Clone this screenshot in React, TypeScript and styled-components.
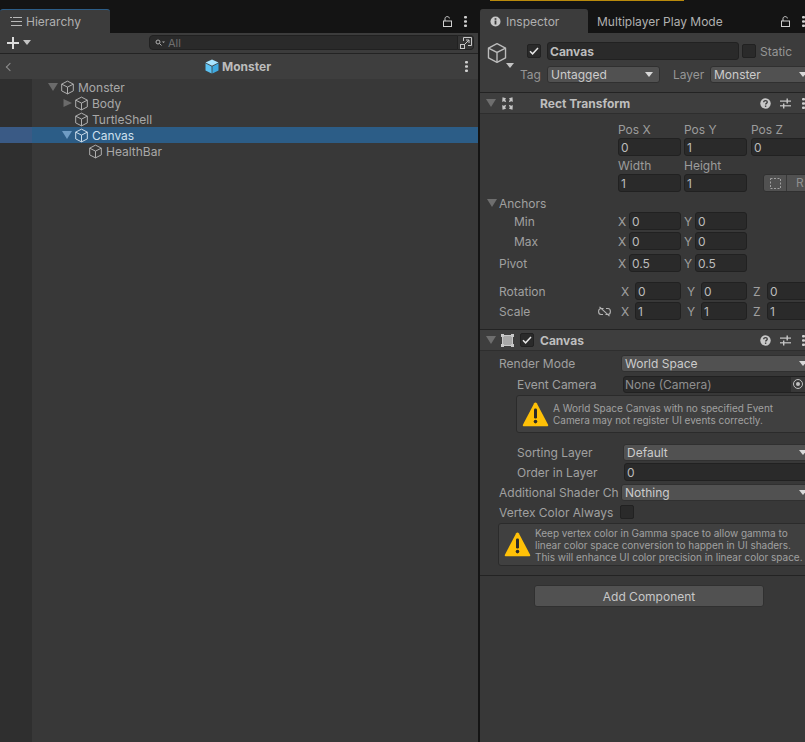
import React from "react";
import styled, { createGlobalStyle } from "styled-components";

const GlobalStyle = createGlobalStyle`
  html, body {
    margin: 0;
    padding: 0;
    background: #141414;
  }
  * { box-sizing: border-box; }
`;

const CubeIcon = ({ size = 16, color = "#c4c4c4", fill = "none" }: { size?: number; color?: string; fill?: string }) => (
  <svg width={size} height={size} viewBox="0 0 16 16" fill="none">
    <path d="M8 1.2 14.2 4.4v7.2L8 14.8 1.8 11.6V4.4Z" fill={fill} stroke={color} strokeWidth={1} strokeLinejoin="round" />
    <path d="M1.8 4.4 8 7.6l6.2-3.2M8 7.6v7.2" stroke={color} strokeWidth={1} />
  </svg>
);

const BlueCube = () => (
  <svg width="14" height="15" viewBox="0 0 14 15">
    <path d="M7 .5 13.5 3.6 7 6.8.5 3.6Z" fill="#a8e4ff" />
    <path d="M.5 4.3 6.6 7.4V14.5L.5 11.4Z" fill="#5cc2f2" />
    <path d="M13.5 4.3 7.4 7.4V14.5L13.5 11.4Z" fill="#3fa9e0" />
  </svg>
);

const Lock = () => (
  <svg width="9" height="11" viewBox="0 0 9 11" fill="none">
    <rect x="0.5" y="5" width="8" height="5.5" stroke="#d0d0d0" />
    <path d="M2 5V2.6C2 1.4 3 .6 4.2.6S6.4 1.4 6.4 2.4" stroke="#d0d0d0" />
  </svg>
);

const Kebab = () => (
  <svg width="3" height="11" viewBox="0 0 3 11">
    <rect y="0" width="3" height="2.6" rx="1" fill="#d0d0d0" />
    <rect y="4.2" width="3" height="2.6" rx="1" fill="#d0d0d0" />
    <rect y="8.4" width="3" height="2.6" rx="1" fill="#d0d0d0" />
  </svg>
);

const Check = () => (
  <svg width="10" height="8" viewBox="0 0 10 8" fill="none">
    <path d="M1 4.2 3.6 6.8 9 1" stroke="#e6e6e6" strokeWidth="1.5" />
  </svg>
);

const Warning = () => (
  <svg width="27" height="27" viewBox="0 0 27 27">
    <path d="M13.5 1.5c.6 0 1 .3 1.3.8l11.3 21.4c.4.8-.1 1.6-1 1.6H1.9c-.9 0-1.4-.8-1-1.6L12.2 2.3c.3-.5.7-.8 1.3-.8Z" fill="#ffc107" />
    <rect x="12" y="7.5" width="3" height="10" rx="1.2" fill="#2b2b2b" />
    <circle cx="13.5" cy="20.6" r="1.8" fill="#2b2b2b" />
  </svg>
);

const HelpIcon = () => (
  <svg width="11" height="11" viewBox="0 0 11 11">
    <circle cx="5.5" cy="5.5" r="5.2" fill="#c8c8c8" />
    <path d="M3.7 4.2c0-1 .8-1.6 1.8-1.6s1.8.6 1.8 1.5c0 1.3-1.7 1.2-1.7 2.5" fill="none" stroke="#3c3c3c" strokeWidth="1.3" />
    <rect x="4.9" y="7.5" width="1.4" height="1.4" fill="#3c3c3c" />
  </svg>
);

const SlidersIcon = () => (
  <svg width="11" height="11" viewBox="0 0 11 11" fill="#c8c8c8">
    <rect x="0" y="2.5" width="11" height="1.2" />
    <rect x="0" y="7.2" width="11" height="1.2" />
    <rect x="6.5" y="0.5" width="1.4" height="5" />
    <rect x="3" y="5.5" width="1.4" height="5" />
  </svg>
);

const RectToolIcon = () => (
  <svg width="13" height="13" viewBox="0 0 13 13" fill="#c4c4c4">
    <path d="M1.5 .3 5 1.2 4.2 2.6 5.2 5.2 2.6 4.2 1.2 5Z" />
    <path d="M11.5 .3 8 1.2 8.8 2.6 7.8 5.2 10.4 4.2 11.8 5Z" />
    <path d="M1.5 12.7 5 11.8 4.2 10.4 5.2 7.8 2.6 8.8 1.2 8Z" />
    <path d="M11.5 12.7 8 11.8 8.8 10.4 7.8 7.8 10.4 8.8 11.8 8Z" />
  </svg>
);

const CanvasIcon = () => (
  <svg width="13" height="13" viewBox="0 0 13 13" fill="none">
    <rect x="1.5" y="1.5" width="10" height="10" fill="#a8a8a8" stroke="#c8c8c8" />
    <rect x="0" y="0" width="3" height="3" fill="#c8c8c8" />
    <rect x="10" y="0" width="3" height="3" fill="#c8c8c8" />
    <rect x="0" y="10" width="3" height="3" fill="#c8c8c8" />
    <rect x="10" y="10" width="3" height="3" fill="#c8c8c8" />
  </svg>
);

const DashedSquare = () => (
  <svg width="11" height="11" viewBox="0 0 11 11" fill="none">
    <rect x="0.5" y="0.5" width="10" height="10" stroke="#a0a0a0" strokeDasharray="2 1.5" />
  </svg>
);

const Page = styled.div`
  width: 805px;
  height: 742px;
  display: flex;
  overflow: hidden;
  background: #141414;
  font-family: Inter, "Liberation Sans", sans-serif;
  font-size: 12px;
  color: #b4b4b4;
`;

const Panel = styled.div<{ $width: number }>`
  width: ${(p) => p.$width}px;
  flex: none;
  display: flex;
  flex-direction: column;
  overflow: hidden;
`;

const PlayBarSlot = styled.div`
  height: 9px;
  flex: none;
  padding-left: 10px;
`;

const PlayBar = styled.div`
  width: 194px;
  height: 1px;
  background: #b98a0c;
`;

const TabStrip = styled.div`
  height: 24px;
  flex: none;
  display: flex;
  align-items: stretch;
  background: #141414;
`;

const Tab = styled.div<{ $active?: boolean; $blue?: boolean; $width: number; $gap?: number }>`
  width: ${(p) => p.$width}px;
  display: flex;
  align-items: center;
  gap: ${(p) => p.$gap ?? 4}px;
  padding-left: ${(p) => (p.$active ? 10 : 9)}px;
  background: ${(p) => (p.$active ? "#3c3c3c" : "transparent")};
  border-radius: 3px 3px 0 0;
  border-top: 1px solid ${(p) => (p.$blue ? "#2c5d87" : p.$active ? "#3c3c3c" : "transparent")};
  color: #b0b0b0;
  font-size: 12px;
`;

const TabTools = styled.div<{ $right: number; $gap: number }>`
  margin-left: auto;
  padding-right: ${(p) => p.$right}px;
  display: flex;
  align-items: center;
  gap: ${(p) => p.$gap}px;
`;

const ListGlyph = () => (
  <svg width="12" height="9" viewBox="0 0 12 9" fill="#b8b8b8">
    <rect x="0" y="0" width="2" height="1" />
    <rect x="3" y="0" width="9" height="1" />
    <rect x="1" y="4" width="2" height="1" />
    <rect x="3" y="4" width="9" height="1" />
    <rect x="1" y="8" width="2" height="1" />
    <rect x="3" y="8" width="9" height="1" />
  </svg>
);

const Toolbar = styled.div`
  height: 21px;
  flex: none;
  display: flex;
  align-items: center;
  padding: 0 4px 1px 7px;
  background: #3c3c3c;
  border-bottom: 1px solid #232323;
`;

const PlusMenu = styled.div`
  width: 142px;
  display: flex;
  align-items: center;
  gap: 4px;
`;

const Plus = styled.span`
  position: relative;
  display: block;
  width: 12px;
  height: 12px;
  &::before,
  &::after {
    content: "";
    position: absolute;
    background: #dcdcdc;
  }
  &::before {
    left: 0;
    right: 0;
    top: 5px;
    height: 2px;
  }
  &::after {
    top: 0;
    bottom: 0;
    left: 5px;
    width: 2px;
  }
`;

const Caret = styled.span<{ $color?: string }>`
  display: block;
  width: 0;
  height: 0;
  flex: none;
  border-left: 4px solid transparent;
  border-right: 4px solid transparent;
  border-top: 5px solid ${(p) => p.$color ?? "#c4c4c4"};
`;

const Search = styled.div`
  width: 309px;
  height: 15px;
  display: flex;
  align-items: center;
  gap: 3px;
  padding-left: 5px;
  background: #2a2a2a;
  border: 1px solid #212121;
  border-radius: 4px 0 0 4px;
  color: #6f6f6f;
  font-size: 11px;
`;

const SearchButton = styled.div`
  width: 16px;
  height: 15px;
  display: flex;
  align-items: center;
  justify-content: center;
  background: #353535;
  border: 1px solid #232323;
  border-left: 0;
  border-radius: 0 4px 4px 0;
`;

const Breadcrumb = styled.div`
  height: 25px;
  flex: none;
  display: flex;
  align-items: center;
  background: #3e3e3e;
  padding: 0 10px 0 5px;
`;

const BackChevron = styled.span`
  display: block;
  width: 6px;
  height: 6px;
  margin-left: 2px;
  border-left: 1.5px solid #8f8f8f;
  border-bottom: 1.5px solid #8f8f8f;
  transform: rotate(45deg);
`;

const BreadcrumbTitle = styled.div`
  flex: 1;
  display: flex;
  align-items: center;
  justify-content: center;
  gap: 3px;
  padding-right: 2px;
  font-weight: 700;
  font-size: 12px;
  color: #bcbcbc;
`;

const Tree = styled.div`
  flex: 1;
  background: linear-gradient(to right, #2f2f2f 32px, #383838 32px);
`;

const TreeRow = styled.div<{ $depth: number; $selected?: boolean }>`
  height: 16px;
  display: flex;
  align-items: center;
  gap: 3px;
  padding-left: ${(p) => 48 + p.$depth * 14}px;
  background: ${(p) => (p.$selected ? "linear-gradient(to right, #3a5a85 32px, #2c5d87 32px)" : "transparent")};
  color: ${(p) => (p.$selected ? "#cfe0ee" : "#a8a8a8")};
`;

const Arrow = styled.span<{ $dir?: "down" | "right" | "none"; $color?: string }>`
  display: block;
  flex: none;
  width: 10px;
  height: 8px;
  margin-right: -1px;
  visibility: ${(p) => (p.$dir === "none" ? "hidden" : "visible")};
  background: ${(p) => p.$color ?? "#6b6b6b"};
  clip-path: ${(p) => (p.$dir === "right" ? "polygon(15% 0, 100% 50%, 15% 100%)" : "polygon(0 0, 100% 0, 50% 100%)")};
`;

const Splitter = styled.div`
  width: 2px;
  flex: none;
  background: #141414;
`;

const InspectorBody = styled.div`
  flex: 1;
  width: 334px;
  background: #383838;
`;

const ObjectHeader = styled.div`
  height: 60px;
  padding: 8px 0 0 6px;
  background: #3c3c3c;
  border-bottom: 1px solid #232323;
`;

const ObjectTop = styled.div`
  display: flex;
  align-items: center;
  height: 20px;
`;

const ObjectIcon = styled.div`
  position: relative;
  width: 22px;
  height: 22px;
  margin-top: 4px;
  flex: none;
  & > span {
    position: absolute;
    right: -6px;
    bottom: -4px;
  }
`;

const CheckBox = styled.span<{ $margin?: number }>`
  display: flex;
  align-items: center;
  justify-content: center;
  width: 14px;
  height: 14px;
  flex: none;
  margin-left: ${(p) => p.$margin ?? 0}px;
  background: #2a2a2a;
  border: 1px solid #212121;
  border-radius: 2px;
`;

const TextBox = styled.div<{ $width?: number; $height?: number; $margin?: number; $bold?: boolean; $color?: string }>`
  width: ${(p) => (p.$width ? `${p.$width}px` : "auto")};
  height: ${(p) => p.$height ?? 18}px;
  flex: ${(p) => (p.$width ? "none" : 1)};
  margin-left: ${(p) => p.$margin ?? 0}px;
  display: flex;
  align-items: center;
  padding-left: 2px;
  background: #2a2a2a;
  border: 1px solid #212121;
  border-radius: 3px;
  color: ${(p) => p.$color ?? "#bcbcbc"};
  font-weight: ${(p) => (p.$bold ? 700 : 400)};
  font-size: 12px;
  overflow: hidden;
  white-space: nowrap;
`;

const Dropdown = styled.div<{ $width?: number; $margin?: number }>`
  width: ${(p) => (p.$width ? `${p.$width}px` : "auto")};
  flex: ${(p) => (p.$width ? "none" : 1)};
  height: 17px;
  margin-left: ${(p) => p.$margin ?? 0}px;
  display: flex;
  align-items: center;
  justify-content: space-between;
  padding: 0 6px 0 3px;
  background: #515151;
  border: 1px solid #303030;
  border-radius: 3px;
  color: #cccccc;
  font-size: 12px;
  white-space: nowrap;
`;

const MutedText = styled.span<{ $margin?: number; $width?: number }>`
  margin-left: ${(p) => p.$margin ?? 0}px;
  width: ${(p) => (p.$width ? `${p.$width}px` : "auto")};
  flex: none;
  color: #969696;
  white-space: nowrap;
`;

const TagRow = styled.div`
  display: flex;
  align-items: center;
  height: 18px;
  margin-top: 4px;
  padding-left: 34px;
`;

const ComponentHeader = styled.div`
  height: 21px;
  display: flex;
  align-items: center;
  padding: 0 0 0 6px;
  background: #3e3e3e;
  border-bottom: 1px solid #2e2e2e;
`;

const IconGap = styled.span`
  width: 6px;
  flex: none;
`;

const ComponentTitle = styled.span<{ $margin: number }>`
  margin-left: ${(p) => p.$margin}px;
  flex: 1;
  font-weight: 700;
  color: #bebebe;
`;

const HeaderTools = styled.div`
  display: flex;
  align-items: center;
  gap: 9px;
  width: 52px;
  margin-right: 2px;
  margin-left: auto;
  & > svg:last-child {
    margin-left: 2px;
  }
`;

const Row = styled.div<{ $top?: number; $height?: number; $indent?: number }>`
  display: grid;
  grid-template-columns: ${(p) => 119 - (p.$indent ?? 0)}px 1fr;
  align-items: center;
  height: ${(p) => p.$height ?? 18}px;
  margin-top: ${(p) => p.$top ?? 0}px;
  padding-left: ${(p) => 19 + (p.$indent ?? 0)}px;
`;

const ColumnRow = styled.div<{ $top?: number }>`
  display: flex;
  gap: 3px;
  padding-left: 138px;
  height: 18px;
  margin-top: ${(p) => p.$top ?? 0}px;
  align-items: center;
`;

const Caption = styled.span<{ $margin?: number }>`
  width: 63px;
  flex: none;
  margin-left: ${(p) => p.$margin ?? 0}px;
  color: #9c9c9c;
`;

const Label = styled.span<{ $between?: boolean }>`
  display: flex;
  align-items: center;
  justify-content: ${(p) => (p.$between ? "space-between" : "flex-start")};
  color: #a0a0a0;
  white-space: nowrap;
  padding-right: ${(p) => (p.$between ? 7 : 0)}px;
`;

const AnchorArrow = styled(Arrow)`
  margin-right: 2px;
`;

const Axes = styled.div`
  display: flex;
  gap: 3px;
`;

const AxisField = styled.div<{ $label: number }>`
  width: 63px;
  display: flex;
  align-items: center;
  flex: none;
  & > span {
    width: ${(p) => p.$label}px;
    flex: none;
    padding-left: ${(p) => (p.$label > 11 ? 3 : 0)}px;
    color: #a0a0a0;
  }
  & > div {
    flex: 1;
  }
`;

const AnchorButtons = styled.div`
  margin-left: 13px;
  height: 18px;
  width: 70px;
  flex: none;
  display: flex;
  background: #515151;
  border: 1px solid #303030;
  border-radius: 3px;
  & > span {
    width: 23px;
    display: flex;
    align-items: center;
    justify-content: center;
    border-right: 1px solid #383838;
  }
  & > b {
    flex: 1;
    font-weight: 400;
    padding-left: 9px;
    color: #8e8e8e;
    line-height: 16px;
  }
`;

const SectionEnd = styled.div<{ $height: number }>`
  height: ${(p) => p.$height}px;
  border-bottom: 1px solid #232323;
`;

const FieldLine = styled.div<{ $top?: number; $indent?: number; $col: number; $height?: number }>`
  display: grid;
  grid-template-columns: ${(p) => p.$col}px 1fr;
  align-items: center;
  height: ${(p) => p.$height ?? 18}px;
  margin-top: ${(p) => p.$top ?? 0}px;
  padding-left: ${(p) => p.$indent ?? 19}px;
`;

const ObjectField = styled.div`
  height: 17px;
  display: flex;
  align-items: center;
  padding-left: 1px;
  background: #2a2a2a;
  border: 1px solid #212121;
  border-radius: 3px;
  color: #8f8f8f;
  position: relative;
  & > span {
    position: absolute;
    right: 0;
    top: 0;
    bottom: 0;
    width: 22px;
    padding-left: 2px;
    display: flex;
    align-items: center;
    background: #383838;
  }
`;

const TargetDot = styled.i`
  display: block;
  width: 10px;
  height: 10px;
  border-radius: 50%;
  border: 1px solid #c0c0c0;
  position: relative;
  &::after {
    content: "";
    position: absolute;
    left: 2px;
    top: 2px;
    width: 4px;
    height: 4px;
    border-radius: 50%;
    background: #c0c0c0;
  }
`;

const HelpBox = styled.div<{ $left: number; $top: number; $height: number }>`
  margin: ${(p) => p.$top}px 0 0 ${(p) => p.$left}px;
  height: ${(p) => p.$height}px;
  display: flex;
  align-items: center;
  gap: 4px;
  padding-left: 5px;
  background: #404040;
  border: 1px solid #2b2b2b;
  border-radius: 3px;
  font-size: 10px;
  line-height: 12px;
  letter-spacing: -0.02px;
  color: #a0a0a0;
  white-space: nowrap;
  & > svg {
    flex: none;
  }
`;

const AddRow = styled.div`
  padding: 9px 0 0 54px;
`;

const AddButton = styled.div`
  width: 230px;
  height: 22px;
  display: flex;
  align-items: center;
  justify-content: center;
  background: #515151;
  border: 1px solid #303030;
  border-radius: 3px;
  color: #c8c8c8;
`;

const PopOutIcon = () => (
  <svg width="12" height="12" viewBox="0 0 12 12" fill="none" stroke="#c8c8c8">
    <path d="M3.5 4V.5h8v8H8" />
    <rect x="0.5" y="7.5" width="4" height="4" />
    <path d="M5 7 9 3M6 3h3v3" />
  </svg>
);

const SearchIcon = () => (
  <svg width="10" height="8" viewBox="0 0 10 8" fill="none" stroke="#b0b0b0">
    <circle cx="3" cy="3" r="2" />
    <path d="M4.5 4.5 6.5 6.5" />
    <path d="M7 2.5h3L8.5 4Z" fill="#b0b0b0" stroke="none" />
  </svg>
);

const LinkOffIcon = () => (
  <svg width="13" height="11" viewBox="0 0 13 11" fill="none" stroke="#b4b4b4" strokeWidth="1.1">
    <path d="M3 2.5H5.5M7.5 8.5H10C11.4 8.5 12.4 7.2 12.4 5.5S11.4 2.5 10 2.5H8M3 2.5C1.6 2.5.6 3.8.6 5.5S1.6 8.5 3 8.5H5" />
    <path d="M1.5.8 11.5 10.2" />
  </svg>
);

const treeItems = [
  { name: "Monster", depth: 0, dir: "down" as const },
  { name: "Body", depth: 1, dir: "right" as const },
  { name: "TurtleShell", depth: 1, dir: "none" as const },
  { name: "Canvas", depth: 1, dir: "down" as const, selected: true },
  { name: "HealthBar", depth: 2, dir: "none" as const },
];

const HeaderIcons = () => (
  <HeaderTools>
    <HelpIcon />
    <SlidersIcon />
    <Kebab />
  </HeaderTools>
);

const Vector = ({ label, values, names }: { label: number; values: string[]; names: string[] }) => (
  <Axes>
    {values.map((v, i) => (
      <AxisField key={names[i]} $label={label}>
        <span>{names[i]}</span>
        <TextBox>{v}</TextBox>
      </AxisField>
    ))}
  </Axes>
);

export default function App() {
  return (
    <Page>
      <GlobalStyle />
      <Panel $width={478}>
        <PlayBarSlot />
        <TabStrip>
          <Tab $active $blue $width={110}>
            <ListGlyph />
            Hierarchy
          </Tab>
          <TabTools $right={11} $gap={12}>
            <Lock />
            <Kebab />
          </TabTools>
        </TabStrip>
        <Toolbar>
          <PlusMenu>
            <Plus />
            <Caret />
          </PlusMenu>
          <Search>
            <SearchIcon />
            All
          </Search>
          <SearchButton>
            <PopOutIcon />
          </SearchButton>
        </Toolbar>
        <Breadcrumb>
          <BackChevron />
          <BreadcrumbTitle>
            <BlueCube />
            Monster
          </BreadcrumbTitle>
          <Kebab />
        </Breadcrumb>
        <Tree>
          {treeItems.map((item) => (
            <TreeRow key={item.name} $depth={item.depth} $selected={item.selected}>
              <Arrow $dir={item.dir} $color={item.selected ? "#6f9cc4" : undefined} />
              <CubeIcon size={15} color={item.selected ? "#d6e4f0" : "#b8b8b8"} />
              {item.name}
            </TreeRow>
          ))}
        </Tree>
      </Panel>
      <Splitter />
      <Panel $width={325}>
        <PlayBarSlot>
          <PlayBar />
        </PlayBarSlot>
        <TabStrip>
          <Tab $active $width={108} $gap={5}>
            <svg width="11" height="11" viewBox="0 0 11 11">
              <circle cx="5.5" cy="5.5" r="5" fill="#c8c8c8" />
              <rect x="4.6" y="4.5" width="1.8" height="4" fill="#3c3c3c" />
              <rect x="4.6" y="2.2" width="1.8" height="1.6" fill="#3c3c3c" />
            </svg>
            Inspector
          </Tab>
          <Tab $width={160}>Multiplayer Play Mode</Tab>
          <TabTools $right={0} $gap={12}>
            <Lock />
            <Kebab />
          </TabTools>
        </TabStrip>
        <InspectorBody>
          <ObjectHeader>
            <ObjectTop>
              <ObjectIcon>
                <CubeIcon size={22} color="#bcbcbc" />
                <Caret />
              </ObjectIcon>
              <CheckBox $margin={19}>
                <Check />
              </CheckBox>
              <TextBox $width={192} $margin={6} $bold>
                Canvas
              </TextBox>
              <CheckBox $margin={3} />
              <MutedText $margin={4}>Static</MutedText>
            </ObjectTop>
            <TagRow>
              <MutedText $width={27}>Tag</MutedText>
              <Dropdown $width={113}>
                Untagged
                <Caret $color="#d8d8d8" />
              </Dropdown>
              <MutedText $margin={13} $width={37}>
                Layer
              </MutedText>
              <Dropdown>
                Monster
                <Caret $color="#d8d8d8" />
              </Dropdown>
            </TagRow>
          </ObjectHeader>

          <ComponentHeader>
            <Arrow $color="#6e6e6e" />
            <IconGap />
            <RectToolIcon />
            <ComponentTitle $margin={26}>Rect Transform</ComponentTitle>
            <HeaderIcons />
          </ComponentHeader>
          <ColumnRow $top={6}>
            <Caption>Pos X</Caption>
            <Caption>Pos Y</Caption>
            <Caption $margin={1}>Pos Z</Caption>
          </ColumnRow>
          <ColumnRow>
            <TextBox $width={63}>0</TextBox>
            <TextBox $width={63}>1</TextBox>
            <TextBox $width={63} $margin={1}>
              0
            </TextBox>
          </ColumnRow>
          <ColumnRow>
            <Caption>Width</Caption>
            <Caption>Height</Caption>
          </ColumnRow>
          <ColumnRow>
            <TextBox $width={63}>1</TextBox>
            <TextBox $width={63}>1</TextBox>
            <AnchorButtons>
              <span>
                <DashedSquare />
              </span>
              <b>R</b>
            </AnchorButtons>
          </ColumnRow>
          <Row $top={2} $indent={-12}>
            <Label>
              <AnchorArrow $color="#6e6e6e" />
              Anchors
            </Label>
          </Row>
          <Row $indent={15}>
            <Label>Min</Label>
            <Vector label={11} names={["X", "Y"]} values={["0", "0"]} />
          </Row>
          <Row $top={2} $indent={15}>
            <Label>Max</Label>
            <Vector label={11} names={["X", "Y"]} values={["0", "0"]} />
          </Row>
          <Row $top={4}>
            <Label>Pivot</Label>
            <Vector label={11} names={["X", "Y"]} values={["0.5", "0.5"]} />
          </Row>
          <Row $top={10}>
            <Label>Rotation</Label>
            <Vector label={17} names={["X", "Y", "Z"]} values={["0", "0", "0"]} />
          </Row>
          <Row $top={2}>
            <Label $between>
              Scale
              <LinkOffIcon />
            </Label>
            <Vector label={17} names={["X", "Y", "Z"]} values={["1", "1", "1"]} />
          </Row>
          <SectionEnd $height={10} />

          <ComponentHeader>
            <Arrow $color="#6e6e6e" />
            <IconGap />
            <CanvasIcon />
            <CheckBox $margin={6}>
              <Check />
            </CheckBox>
            <ComponentTitle $margin={6}>Canvas</ComponentTitle>
            <HeaderIcons />
          </ComponentHeader>

          <FieldLine $top={3} $col={122}>
            <Label>Render Mode</Label>
            <Dropdown>
              World Space
              <Caret $color="#d8d8d8" />
            </Dropdown>
          </FieldLine>
          <FieldLine $top={3} $indent={37} $col={106}>
            <Label>Event Camera</Label>
            <ObjectField>
              None (Camera)
              <span>
                <TargetDot />
              </span>
            </ObjectField>
          </FieldLine>
          <HelpBox $left={36} $top={2} $height={38}>
            <Warning />
            <div>
              A World Space Canvas with no specified Event
              <br />
              Camera may not register UI events correctly.
            </div>
          </HelpBox>
          <FieldLine $top={10} $indent={37} $col={106}>
            <Label>Sorting Layer</Label>
            <Dropdown>
              Default
              <Caret $color="#d8d8d8" />
            </Dropdown>
          </FieldLine>
          <FieldLine $top={2} $indent={37} $col={107}>
            <Label>Order in Layer</Label>
            <TextBox>0</TextBox>
          </FieldLine>
          <FieldLine $top={2} $col={122}>
            <Label>Additional Shader Ch</Label>
            <Dropdown>
              Nothing
              <Caret $color="#d8d8d8" />
            </Dropdown>
          </FieldLine>
          <FieldLine $top={2} $col={121}>
            <Label>Vertex Color Always</Label>
            <CheckBox />
          </FieldLine>
          <HelpBox $left={18} $top={2} $height={43}>
            <Warning />
            <div>
              Keep vertex color in Gamma space to allow gamma to
              <br />
              linear color space conversion to happen in UI shaders.
              <br />
              This will enhance UI color precision in linear color space.
            </div>
          </HelpBox>
          <SectionEnd $height={10} />
          <AddRow>
            <AddButton>Add Component</AddButton>
          </AddRow>
        </InspectorBody>
      </Panel>
    </Page>
  );
}
